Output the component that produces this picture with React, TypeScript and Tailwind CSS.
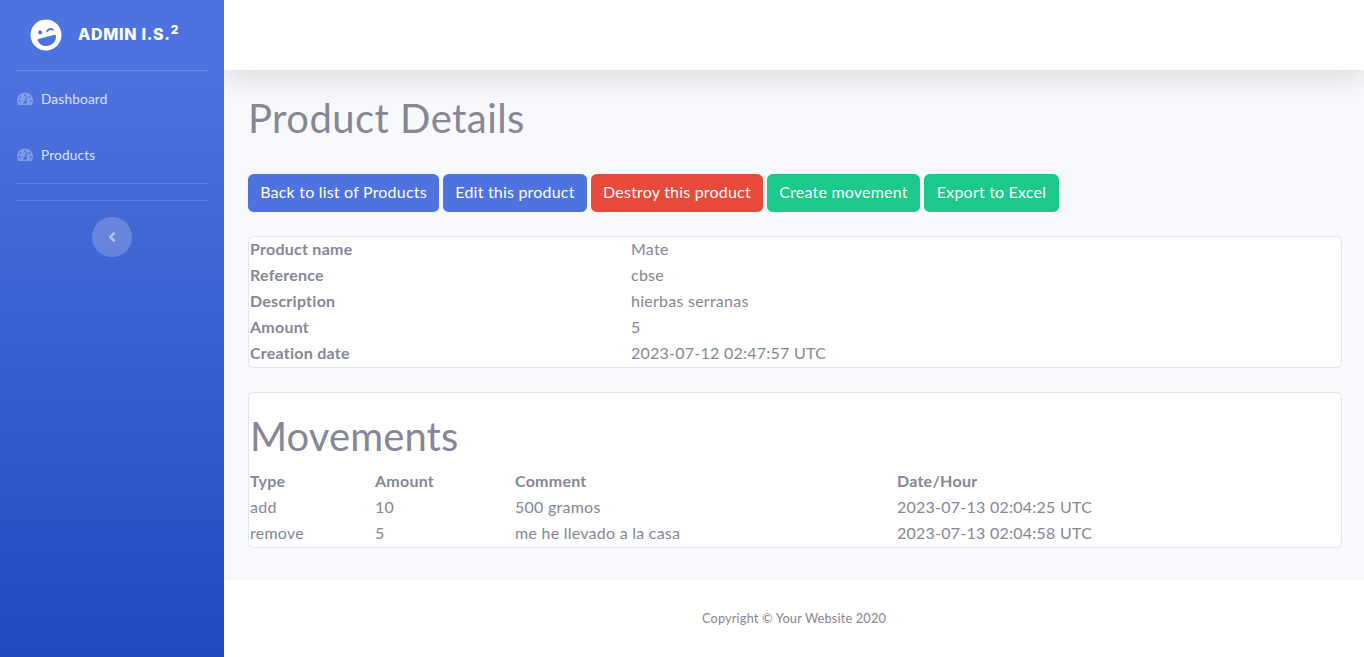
import { FaLaughWink, FaAngleLeft } from "react-icons/fa";

const font = { fontFamily: 'Lato, sans-serif' };

function Gauge() {
  return (
    <svg viewBox="0 0 16 14" className="mr-[8px] h-[14px] w-[16px] shrink-0">
      <path
        fill="#fff"
        fillOpacity="0.3"
        fillRule="evenodd"
        d="M8 0.5C3.6 0.5 0 4.1 0 8.5c0 1.6.4 3.1 1.1 4.5h13.8c.7-1.4 1.1-2.9 1.1-4.5C16 4.1 12.4.5 8 .5ZM8 2.2a.9.9 0 1 1 0 1.8.9.9 0 0 1 0-1.8ZM3.6 4.2a.9.9 0 1 1 0 1.8.9.9 0 0 1 0-1.8ZM12.4 4.2a.9.9 0 1 1 0 1.8.9.9 0 0 1 0-1.8ZM2.2 8a.9.9 0 1 1 0 1.8.9.9 0 0 1 0-1.8ZM13.8 8a.9.9 0 1 1 0 1.8.9.9 0 0 1 0-1.8ZM9.7 3.9l.9.3-1.3 5.1c.3.3.5.7.5 1.2 0 .5-.2.9-.5 1.2H6.7c-.3-.3-.5-.7-.5-1.2 0-1 .8-1.8 1.8-1.8Z"
      />
    </svg>
  );
}

function NavItem({ label }: { label: string }) {
  return (
    <a className="flex h-[56px] items-center pl-[17px] text-[13.6px] tracking-[0.2px] text-white/80">
      <Gauge />
      {label}
    </a>
  );
}

function Btn({ label, color, w }: { label: string; color: string; w: string }) {
  return (
    <a className={`flex h-[38px] items-center justify-center rounded-[5.6px] pb-[2px] text-[16px] tracking-[0.2px] whitespace-nowrap text-white ${w} ${color}`}>
      {label}
    </a>
  );
}

const details = [
  ["Product name", "Mate"],
  ["Reference", "cbse"],
  ["Description", "hierbas serranas"],
  ["Amount", "5"],
  ["Creation date", "2023-07-12 02:47:57 UTC"],
];

const moves = [
  ["add", "10", "500 gramos", "2023-07-13 02:04:25 UTC"],
  ["remove", "5", "me he llevado a la casa", "2023-07-13 02:04:58 UTC"],
];

export default function App() {
  return (
    <div className="flex h-[657px] overflow-hidden bg-[#f8f9fc] text-[16px] tracking-[0.25px] text-[#858796]" style={font}>
      <aside className="relative z-10 flex w-[224px] shrink-0 flex-col bg-gradient-to-b from-[#4e73df] from-10% to-[#224abe] px-[16px]">
        <div className="-mx-[16px] flex h-[70px] shrink-0 items-center pl-[30px] text-white">
          <FaLaughWink className="mr-[16px] h-[32px] w-[32px] -rotate-[15deg]" />
          <span className="pb-[2px] text-[16px] font-extrabold tracking-[0.7px]" style={{ fontFamily: "Inter, sans-serif" }}>
            ADMIN I.S.<sup className="relative -top-[6px] align-baseline text-[12px]">2</sup>
          </span>
        </div>
        <hr className="border-t border-white/15" />
        <nav className="-mx-[16px] flex flex-col">
          <NavItem label="Dashboard" />
          <NavItem label="Products" />
        </nav>
        <hr className="border-t border-white/15" />
        <hr className="mt-[16px] border-t border-white/15" />
        <button className="mx-auto mt-[16px] flex h-[40px] w-[40px] items-center justify-center rounded-full bg-white/20 text-white/50">
          <FaAngleLeft className="h-[16px] w-[10px]" />
        </button>
      </aside>

      <div className="flex min-w-0 flex-1 flex-col">
        <header className="h-[70px] shrink-0 bg-white shadow-[0_8px_28px_rgba(58,59,69,0.15)]" />
        <main className="flex flex-1 flex-col pr-[22px] pl-[24px]">
          <h1 className="mt-[24px] text-[40px] leading-[48px] font-normal tracking-[0.45px]">Product Details</h1>
          <div className="mt-[32px] flex gap-[4px]">
            <Btn label="Back to list of Products" color="bg-[#4e73df]" w="w-[191px]" />
            <Btn label="Edit this product" color="bg-[#4e73df]" w="w-[144px]" />
            <Btn label="Destroy this product" color="bg-[#e74a3b]" w="w-[172px]" />
            <Btn label="Create movement" color="bg-[#1cc88a]" w="w-[153px]" />
            <Btn label="Export to Excel" color="bg-[#1cc88a]" w="w-[135px]" />
          </div>
          <section className="mt-[24px] grid grid-cols-[381px_1fr] rounded-[5.6px] border border-[#e3e6f0] bg-white px-[1px]">
            {details.map(([k, v]) => (
              <div key={k} className="col-span-2 grid h-[26px] grid-cols-subgrid items-center pb-[2px]">
                <span className="font-bold">{k}</span>
                <span>{v}</span>
              </div>
            ))}
          </section>
          <section className="mt-[24px] rounded-[5.6px] border border-[#e3e6f0] bg-white px-[1px] pb-[1px]">
            <h1 className="mt-[19px] text-[40px] leading-[48px] font-normal tracking-[0.1px]">Movements</h1>
            <div className="mt-[8px] grid grid-cols-[125px_140px_382px_1fr]">
              <div className="col-span-4 grid h-[26px] grid-cols-subgrid items-center pb-[1px] font-bold">
                <span>Type</span>
                <span>Amount</span>
                <span>Comment</span>
                <span>Date/Hour</span>
              </div>
              {moves.map((r) => (
                <div key={r[0]} className="col-span-4 grid h-[26px] grid-cols-subgrid items-center pb-[1px]">
                  {r.map((c) => (
                    <span key={c}>{c}</span>
                  ))}
                </div>
              ))}
            </div>
          </section>
        </main>
        <footer className="flex h-[77px] shrink-0 items-center justify-center bg-white text-[12.8px] tracking-[0.15px]">
          Copyright © Your Website 2020
        </footer>
      </div>
    </div>
  );
}
